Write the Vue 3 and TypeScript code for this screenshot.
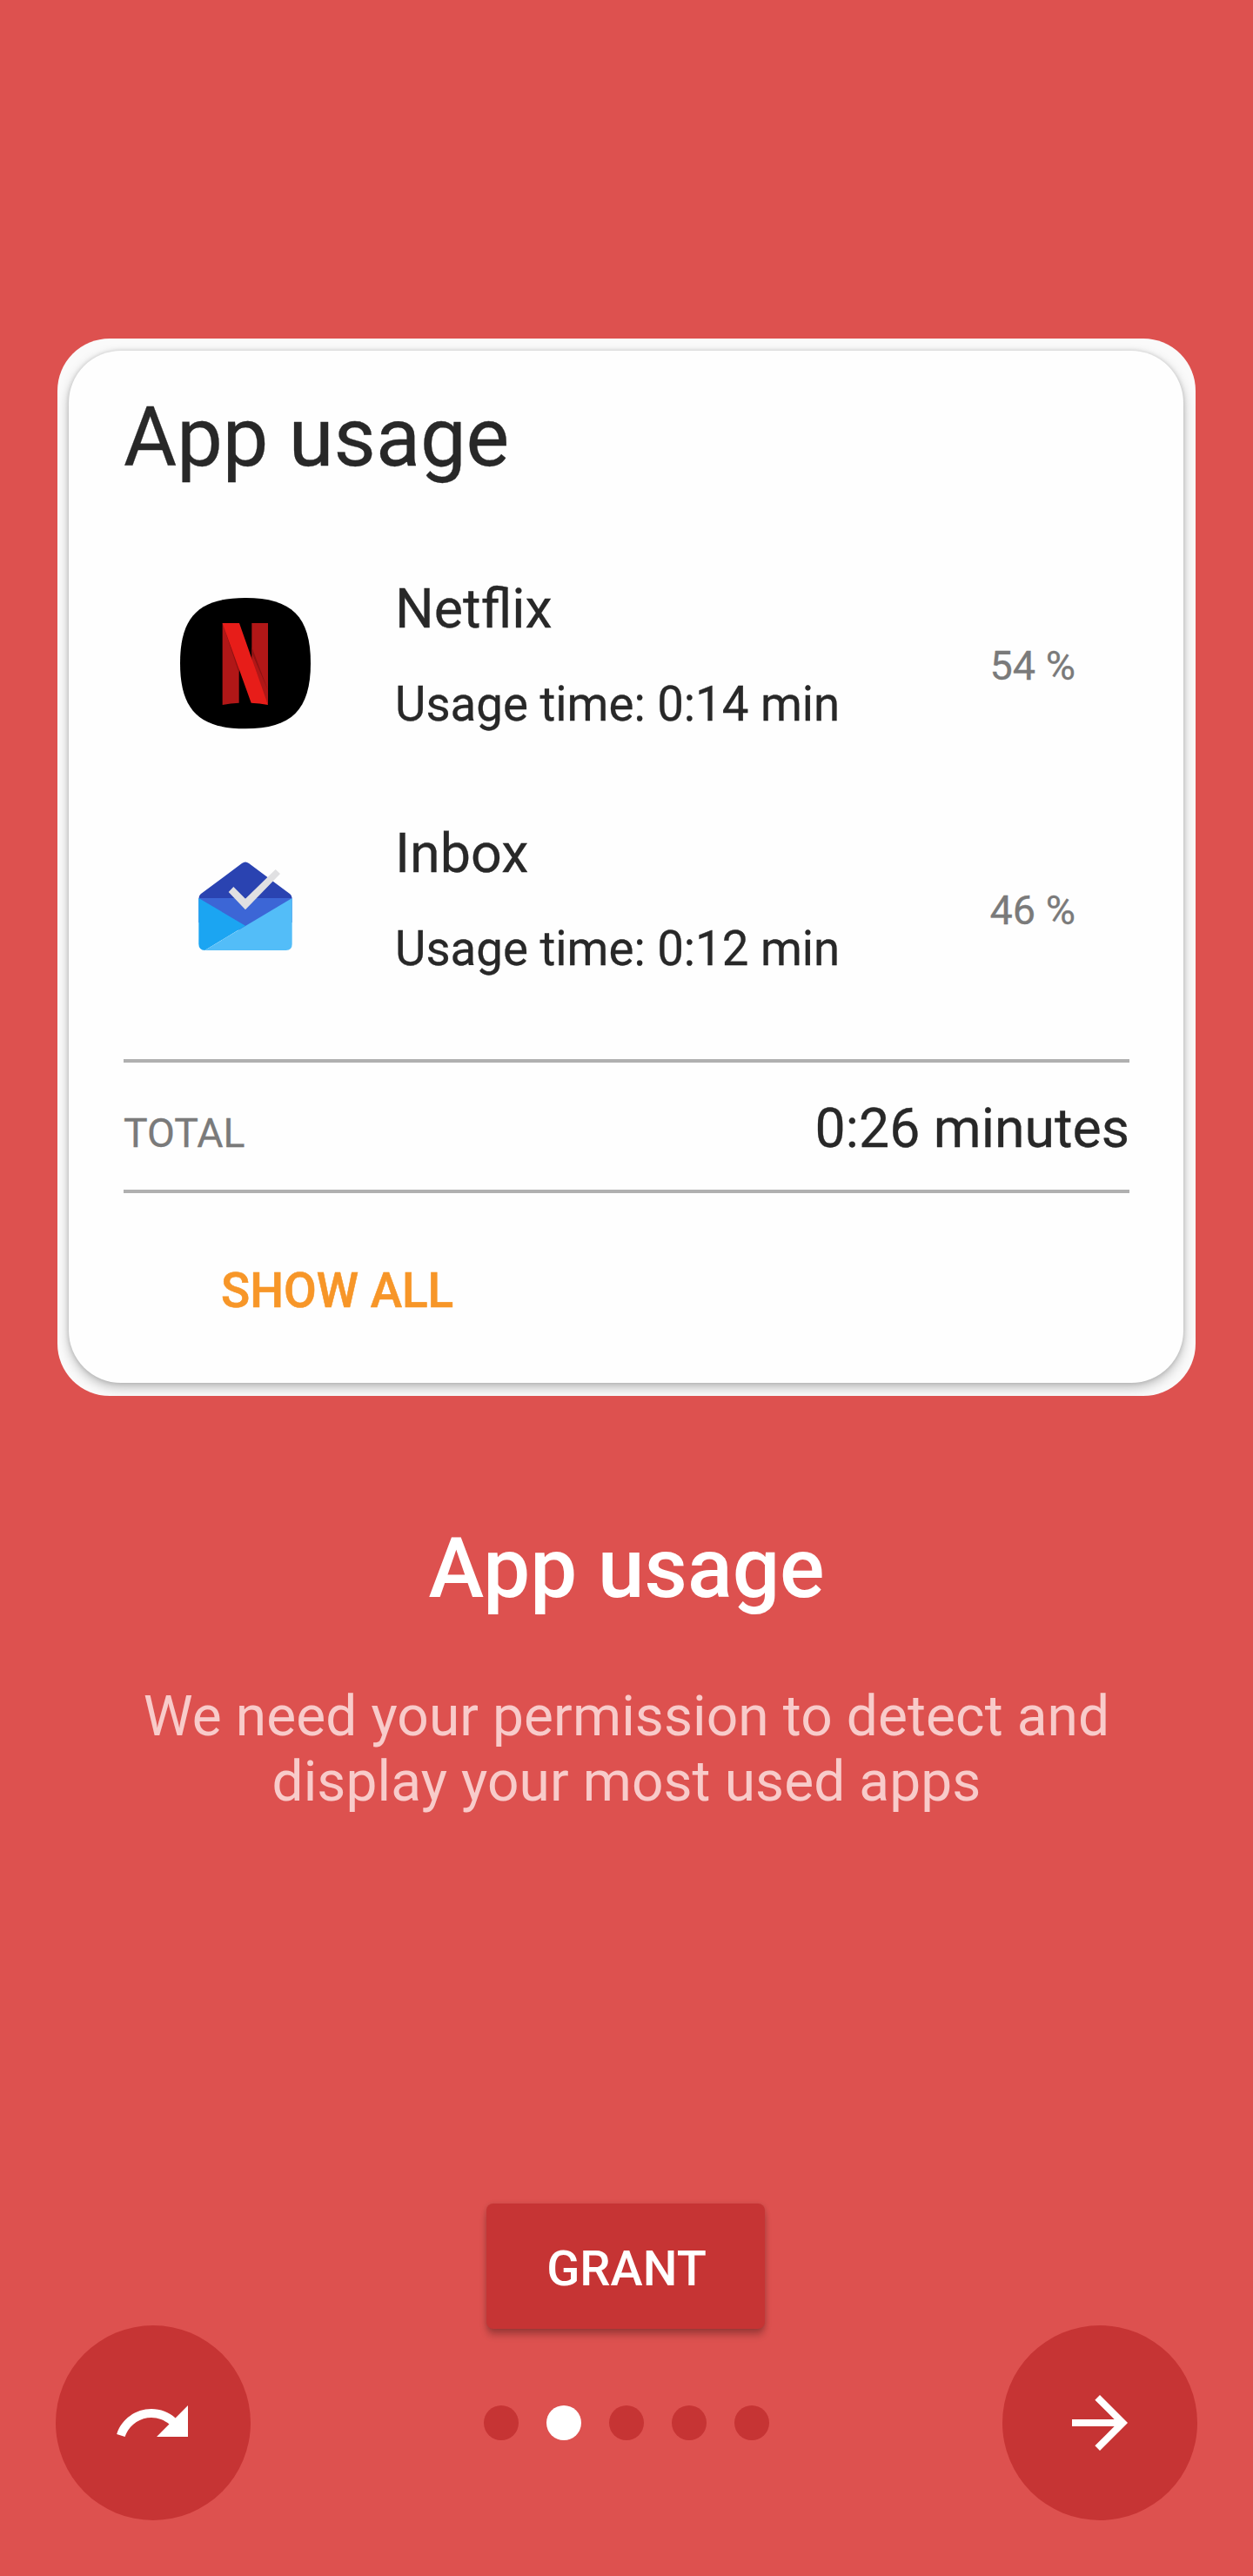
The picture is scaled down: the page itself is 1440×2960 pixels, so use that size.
<script setup lang="ts">
interface UsageEntry {
  id: 'netflix' | 'inbox'
  name: string
  time: string
  share: number
}

const entries: UsageEntry[] = [
  { id: 'netflix', name: 'Netflix', time: '0:14', share: 54 },
  { id: 'inbox', name: 'Inbox', time: '0:12', share: 46 },
]

const slideCount = 5
const activeSlide = 2
</script>

<template>
  <main class="intro">
    <section class="frame">
      <div class="card">
        <h2 class="card-title">App usage</h2>
        <ul class="entries">
          <li v-for="entry in entries" :key="entry.id" class="entry">
            <svg v-if="entry.id === 'netflix'" class="app-icon" viewBox="78 78 456 456">
              <path d="M306 81C466 81 531 146 531 306S466 532 306 532S81 466 81 306S146 81 306 81Z" fill="#000" />
              <path d="M227 168H284V443Q255 444 227 450Z" fill="#b11717" />
              <path d="M328 168H384V450L328 330Z" fill="#b11717" />
              <path d="M227 168L284 340V322Z M384 400L328 250V270Z" fill="#8d1212" />
              <path d="M227 168H285L384 450Q355 444 326 443Z" fill="#e71d19" />
            </svg>
            <svg v-else class="app-icon" viewBox="18 21 456 456">
              <path d="M86 216Q85 208 92 202L234 96Q246 87 258 96L400 202Q407 208 407 216Z" fill="#2a43b1" />
              <path d="M85 216H407V300L246 330L85 300Z" fill="#3c66d6" />
              <path d="M85 216L246 311L106 396Q85 394 85 374Z" fill="#1ba5f2" />
              <path d="M407 216V375Q407 396 386 396H106Z" fill="#53bdf8" />
              <path d="M205 177L246 218L350 117L366 132L246 256L188 195Z" fill="#e0e0e2" />
            </svg>
            <div class="entry-text">
              <div class="entry-name">{{ entry.name }}</div>
              <div class="entry-time">Usage time: {{ entry.time }} min</div>
            </div>
            <div class="entry-share">{{ entry.share }} %</div>
          </li>
        </ul>
        <div class="total">
          <span class="total-label">TOTAL</span>
          <span class="total-value">0:26 minutes</span>
        </div>
        <a class="show-all">SHOW ALL</a>
      </div>
    </section>

    <h1 class="title">App usage</h1>
    <p class="description">We need your permission to detect and display your most used apps</p>

    <footer class="footer">
      <button class="grant" type="button">GRANT</button>
      <nav class="nav">
        <button class="round" type="button" aria-label="Skip">
          <svg viewBox="0 0 24 24">
            <path d="M18.4 10.6C16.55 8.99 14.15 8 11.5 8c-4.65 0-8.58 3.03-9.96 7.22L3.9 16c1.05-3.19 4.05-5.5 7.6-5.5 1.95 0 3.73.72 5.12 1.88L13 16h9V7l-3.6 3.6z" />
          </svg>
        </button>
        <div class="dots">
          <span v-for="n in slideCount" :key="n" class="dot" :class="{ active: n === activeSlide }"></span>
        </div>
        <button class="round" type="button" aria-label="Next">
          <svg viewBox="0 0 24 24">
            <path d="M12 4l-1.41 1.41L16.17 11H4v2h12.17l-5.58 5.59L12 20l8-8z" />
          </svg>
        </button>
      </nav>
    </footer>
  </main>
</template>

<style>
body {
  margin: 0;
  background: #dd514f;
}
</style>

<style scoped>
.intro {
  box-sizing: border-box;
  width: 1440px;
  height: 2960px;
  padding: 389px 64px 64px;
  display: flex;
  flex-direction: column;
  align-items: center;
  background: #dd514f;
  font-family: Roboto, sans-serif;
}

.frame {
  box-sizing: border-box;
  width: 1308px;
  height: 1215px;
  padding: 14px 14px 15px 13px;
  border-radius: 60px;
  background: #fafafa;
  overflow: hidden;
}

.card {
  box-sizing: border-box;
  height: 1186px;
  padding: 44px 62px 0 63px;
  border-radius: 60px;
  background: #fefefe;
  box-shadow: 0 0 5px rgba(0, 0, 0, 0.15), 0 5px 13px rgba(0, 0, 0, 0.26);
  color: #282828;
  -webkit-text-stroke-width: 0.3px;
}

.card-title {
  margin: 0;
  font-size: 93.8px;
  line-height: 112px;
  font-weight: 400;
}

.entries {
  margin: 102px 0 0;
  padding: 0 62px 0 64px;
  list-style: none;
  display: flex;
  flex-direction: column;
  gap: 101px;
}

.entry {
  height: 180px;
  display: flex;
  align-items: flex-start;
}

.app-icon {
  width: 152px;
  height: 152px;
  margin-top: 25px;
}

.entry-text {
  flex: 1;
  margin: 1px 0 0 96px;
  display: flex;
  flex-direction: column;
  gap: 39px;
}

.entry-name {
  font-size: 62.8px;
  line-height: 76px;
}

.entry-time {
  font-size: 54.6px;
  line-height: 64px;
}

.entry-share {
  margin-top: 76px;
  font-size: 46.8px;
  line-height: 56px;
  color: #7a7a7a;
}

.total {
  box-sizing: border-box;
  height: 154px;
  margin-top: 95px;
  padding: 38px 0 0;
  border-top: 4px solid #b0b0b0;
  border-bottom: 4px solid #b0b0b0;
  display: flex;
  justify-content: space-between;
  align-items: baseline;
}

.total-label {
  font-size: 46.4px;
  color: #7a7a7a;
}

.total-value {
  font-size: 62.6px;
  line-height: 76px;
}

.show-all {
  display: block;
  margin: 80px 0 0 112px;
  font-size: 54.8px;
  line-height: 64px;
  font-weight: 500;
  color: #f79628;
  -webkit-text-stroke-width: 0.6px;
}

.title {
  margin: 142px 0 0;
  font-size: 96px;
  line-height: 112px;
  font-weight: 500;
  color: #fff;
}

.description {
  width: 1184px;
  margin: 77px 0 0;
  font-size: 64px;
  line-height: 75px;
  letter-spacing: 0.1px;
  text-align: center;
  color: #f8cbca;
}

.footer {
  width: 100%;
  margin-top: auto;
  display: flex;
  flex-direction: column;
  align-items: center;
}

.grant {
  width: 320px;
  height: 144px;
  margin-right: 2px;
  padding: 6px 0 0 2px;
  border: 0;
  border-radius: 8px;
  background: #c63434;
  box-shadow: 0 8px 8px -1px rgba(0, 0, 0, 0.24), 0 1px 6px rgba(0, 0, 0, 0.14);
  font-family: inherit;
  font-size: 56px;
  line-height: 64px;
  font-weight: 500;
  color: #fff;
}

.nav {
  width: 100%;
  margin-top: -4px;
  display: flex;
  justify-content: space-between;
  align-items: center;
}

.round {
  width: 224px;
  height: 224px;
  padding: 0;
  border: 0;
  border-radius: 50%;
  background: #c63434;
  display: flex;
  align-items: center;
  justify-content: center;
}

.round svg {
  width: 96px;
  height: 96px;
  fill: #fff;
}

.dots {
  display: flex;
  gap: 32px;
}

.dot {
  width: 40px;
  height: 40px;
  border-radius: 50%;
  background: #c63434;
}

.dot.active {
  background: #fff;
}
</style>
